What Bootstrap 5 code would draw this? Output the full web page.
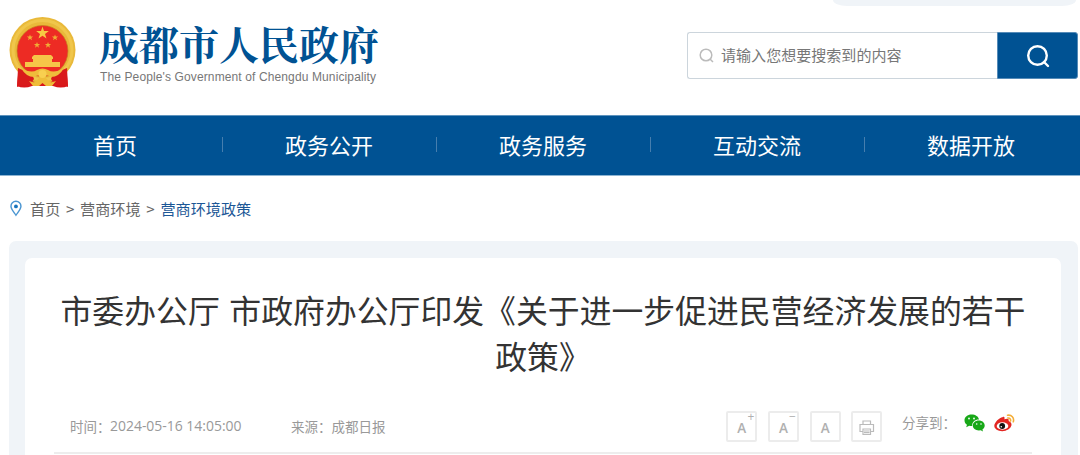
<!DOCTYPE html>
<html lang="zh-CN">
<head>
<meta charset="utf-8">
<meta name="viewport" content="width=device-width, initial-scale=1">
<title>成都市人民政府</title>
<link href="https://cdn.jsdelivr.net/npm/bootstrap@5.3.0/dist/css/bootstrap.min.css" rel="stylesheet">
<style>
  body{font-family:"Noto Sans CJK SC",sans-serif;background:#fff;color:#333}
  .site-head{height:115px;padding:16px 2px 0 9px}
  .top-strip{top:0;right:4px;width:243px;height:6px;border-radius:0 0 14px 14px / 0 0 6px 6px;background:#f0f4f8}
  .site-name{font-family:"Noto Serif CJK SC","Noto Sans CJK SC",serif;font-weight:700;font-size:40px;line-height:48px;color:#005293;white-space:nowrap;margin:3px 0 0 -1px}
  .site-en{font-family:"Liberation Sans",sans-serif;font-size:12px;line-height:14px;color:#777;white-space:nowrap;margin-top:3px;letter-spacing:.12px}
  .brand-text{margin-left:23px}
  .search-box{width:391px;height:47px;margin-top:16px}
  .search-field{border:1px solid #ccd5dc;border-right:0;border-radius:3px 0 0 3px;font-size:15.05px;color:#777;padding-left:11px}
  .search-field svg{margin-right:7px}
  .search-go{width:81px;background:#005293;border:1px solid #558bb8;border-radius:0 3px 3px 0}
  .main-nav{height:61px;background:#005293;border-top:1px solid #5e93bd;border-bottom:1px solid #8db4d2;padding-left:8px;padding-right:2px}
  .main-nav .nav-link{color:#fff;font-size:22px;line-height:32px;padding:0;width:214px;white-space:nowrap;flex:none;margin-top:-3px}
  .main-nav .nav-link+.nav-link::before{content:"";position:absolute;left:0;top:9px;width:1px;height:15px;background:#467eae}
  .crumbs{height:65px;padding-left:10px;font-size:15.15px;color:#666}
  .crumbs .here{color:#1c5796}
  .crumbs .sep{width:11px;margin:0 4.4px}
  .panel-bg{background:#f0f4f8;margin:0 2px 0 9px;padding:17px 17px 0 16px;border-radius:7px 7px 0 0;height:214px}
  .sheet{background:#fff;border-radius:7px 7px 0 0;height:197px;padding:28px 29px 0}
  .doc-title{font-size:31.85px;line-height:46px;font-weight:400;color:#333;white-space:nowrap;margin:0;word-spacing:2.5px}
  .meta-row{height:56px;border-bottom:2px solid #ededed;padding:3px 17px 0 16px;font-size:13.5px;color:#999;margin-top:20px;width:978px}
  .meta-row .digits{font-family:"Open Sans","Noto Sans",sans-serif;font-size:13.95px}
  .tool{width:31px;height:31px;border:2px solid #ececec;border-radius:2px;margin-right:10.7px;font-family:"Open Sans",sans-serif;font-weight:600;font-size:13.5px;line-height:31px;color:#b0b0b0}
  .tool-sign{top:-3px;right:1px;font-size:12px;line-height:14px;font-weight:400}
</style>
</head>
<body>
<header class="site-head d-flex justify-content-between position-relative">
  <div class="top-strip position-absolute"></div>
  <div class="d-flex">
    <svg width="68" height="73" viewBox="0 0 68 73">
      <path d="M10 49L8 70Q15 73 23 70H44Q52 73 59 70L57 49Z" fill="#d9151b"/>
      <circle cx="33.5" cy="34" r="33" fill="#e9b93a"/>
      <circle cx="33.5" cy="34" r="29.5" fill="none" stroke="#f0c64b" stroke-width="3"/>
      <circle cx="33.5" cy="35" r="25.5" fill="#ed2b24" stroke="#c57e20" stroke-width=".7"/>
      <path d="M33.5 10.500l1.500 4.600h4.900L36 18l1.500 4.600-4-2.800-4 2.800L31 18l-3.900-2.900H32z" fill="#f7c943"/>
      <g fill="#f0ad35">
        <path id="st" d="M21 18.500l.8 2h2.300l-1.800 1.400.7 2.300-2-1.400-2 1.400.7-2.300-1.800-1.400h2.300z"/>
        <use href="#st" x="25"/><use href="#st" x="7" y="7.500"/><use href="#st" x="18" y="7.500"/>
      </g>
      <path d="M25 39h17l2 2v2h-1v3h8v5H16v-5h8v-3h-1v-2z" fill="#f6c548"/>
      <path d="M9 52L23 58 25 63 20 70Q13 68 8 71ZM58 52L44 58 42 63 47 70Q54 68 59 71Z" fill="#d91a1b"/>
      <path d="M12 52Q22 58 28 54Q33.500 51 39 54Q45 58 55 52Q50 61 42 61Q38 58 33.500 60Q29 58 25 61Q17 61 12 52Z" fill="#efbd3b"/>
      <path d="M20 65Q27 68 29 63Q33.500 58 38 63Q40 68 47 65L43 70H37L33.500 67 30 70H24Z" fill="#efbd39"/>
      <circle cx="33.500" cy="58" r="4" fill="#f8cf50"/>
    </svg>
    <div class="brand-text">
      <div class="site-name">成都市人民政府</div>
      <div class="site-en">The People's Government of Chengdu Municipality</div>
    </div>
  </div>
  <div class="search-box d-flex">
    <div class="search-field flex-grow-1 d-flex align-items-center">
      <svg width="15" height="15" viewBox="0 0 15 15" fill="none" stroke="#bbb" stroke-width="1.5"><circle cx="7" cy="7" r="5.800"/><path d="M11 11l3 3"/></svg>
      <span>请输入您想要搜索到的内容</span>
    </div>
    <div class="search-go d-flex align-items-center justify-content-center">
      <svg width="24" height="24" viewBox="0 0 24 24" fill="none" stroke="#fff" stroke-width="2.4" stroke-linecap="round"><circle cx="11.5" cy="11.5" r="9.3"/><path d="M18 18l4 4"/></svg>
    </div>
  </div>
</header>
<nav class="main-nav nav flex-nowrap align-items-center text-center">
  <a class="nav-link position-relative">首页</a><a class="nav-link position-relative">政务公开</a><a class="nav-link position-relative">政务服务</a><a class="nav-link position-relative">互动交流</a><a class="nav-link position-relative">数据开放</a>
</nav>
<div class="crumbs d-flex align-items-center">
  <svg class="me-2" width="12" height="17" viewBox="0 0 12.500 17"><path d="M6.200 1C3.200 1 1 3.200 1 6.200c0 3 3 6 5.200 9.300 2.200-3.300 5.200-6.300 5.200-9.300C11.400 3.200 9.200 1 6.200 1z" fill="none" stroke="#4b96d2" stroke-width="1.500"/><circle cx="6.200" cy="6.300" r="2" fill="#1774bd"/></svg>
  <span>首页</span><span class="sep text-center">&gt;</span><span>营商环境</span><span class="sep text-center">&gt;</span><span class="here">营商环境政策</span>
</div>
<main class="panel-bg">
  <article class="sheet">
    <h1 class="doc-title text-center">市委办公厅 市政府办公厅印发《关于进一步促进民营经济发展的若干<br>政策》</h1>
    <div class="meta-row d-flex align-items-center">
      <span style="width:40px" class="text-nowrap">时间：</span><span class="digits text-nowrap" style="width:181px">2024-05-16 14:05:00</span>
      <span class="text-nowrap">来源：成都日报</span>
      <div class="ms-auto d-flex align-items-center">
        <div class="tool position-relative text-center">A<span class="tool-sign position-absolute">+</span></div>
        <div class="tool position-relative text-center">A<span class="tool-sign position-absolute">−</span></div>
        <div class="tool text-center">A</div>
        <div class="tool"><svg class="d-block" width="27" height="27" viewBox="1 1 27 27" fill="none" stroke="#bbb" stroke-width="1.200"><path d="M11 12.500V9h7.500v3.500M11 19.500H8v-7h13.500v7h-3M11 17h7.500v5.500H11zM12 19h5.500M12 20.700h5.500"/></svg></div>
        <div class="d-flex align-items-center mb-2">
        <span class="text-nowrap" style="margin-left:9px;width:62px">分享到：</span>
        <svg width="21" height="18" viewBox="0 0 21 18"><path d="M7.500.5C3.500.5.5 3 .5 6.300c0 2 1 3.500 2.500 4.500l-.8 2.500 3-1.500q1 .3 3 .2C8 8 11 5.500 15 5.600 14.500 2.500 11.500.5 7.500.5z" fill="#18a818"/><path d="M14.800 6.500c-3.400 0-6 2.200-6 5s2.600 4.900 6 4.900l1.900-.2 2.300 1.200-.6-1.900c1.400-1 2.300-2.300 2.300-4 0-2.800-2.500-5-5.900-5z" fill="#18a818"/><g fill="#fff"><circle cx="5" cy="4.500" r=".9"/><circle cx="10" cy="4.500" r=".9"/><circle cx="12.700" cy="10" r=".8"/><circle cx="17" cy="10" r=".8"/></g></svg>
        <svg style="margin-left:9px" width="21" height="18" viewBox="0 0 21 18"><path d="M8.500 3.200C10.500 2 11 4 10.300 5.300c3-1.200 5.200-.6 4.300 1.800 2 .7 3.400 2.200 2.800 4.500-.8 3-4.500 5.600-9.200 5.600C4 17.200.3 15 .3 11.800.3 8.500 5.500 3.300 8.500 3.200z" fill="#e32622"/><ellipse cx="8.500" cy="12" rx="5.800" ry="3.700" fill="#fff"/><circle cx="8.200" cy="12" r="2.900" fill="#111"/><circle cx="7.300" cy="12.800" r=".8" fill="#fff"/><path d="M13.500 1.200c4-.8 7 2.800 5.800 6.600M13.800 4c1.900-.3 3.200 1.200 2.700 3" fill="none" stroke="#f4ae38" stroke-width="1.600" stroke-linecap="round"/></svg>
        </div>
      </div>
    </div>
  </article>
</main>
<script src="https://cdn.jsdelivr.net/npm/bootstrap@5.3.0/dist/js/bootstrap.bundle.min.js"></script>
</body>
</html>
